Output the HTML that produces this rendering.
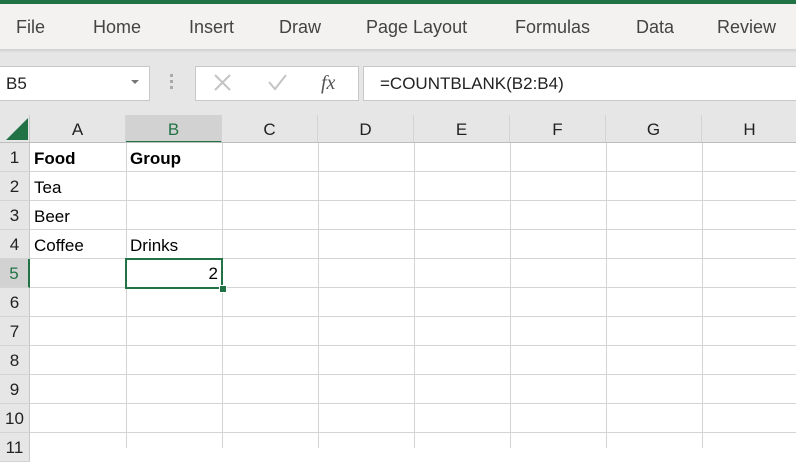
<!DOCTYPE html><html><head><style>
body{margin:0;width:796px;height:448px;overflow:hidden;background:#fff;font-family:"Liberation Sans",sans-serif;position:relative}
.a{position:absolute}
.tab{position:absolute;top:17px;font-size:18px;color:#444}
.ch{position:absolute;top:115px;height:28px;line-height:30px;text-align:center;font-size:17px;color:#222;border-right:1px solid #d4d4d4;background:#e6e6e6;box-sizing:border-box}
.rh{position:absolute;left:0;width:30px;height:29px;line-height:29px;text-align:center;font-size:17px;color:#222;background:#e6e6e6;border-bottom:1px solid #d4d4d4;border-right:1px solid #c8c8c8;box-sizing:border-box}
.c{position:absolute;font-size:17px;color:#000;line-height:29px}
</style></head><body>
<div class="a" style="left:0;top:0;width:796px;height:4px;background:#217346"></div>
<div class="a" style="left:0;top:4px;width:796px;height:45px;background:#f3f2f1"></div>
<div class="a" style="left:0;top:49px;width:796px;height:66px;background:#e6e6e6"></div>
<div class="a" style="left:0;top:49px;width:796px;height:4px;background:linear-gradient(#d0d0d0,#e6e6e6)"></div>
<div class="tab" style="left:16px">File</div><div class="tab" style="left:93px">Home</div><div class="tab" style="left:189px">Insert</div><div class="tab" style="left:279px">Draw</div><div class="tab" style="left:366px">Page Layout</div><div class="tab" style="left:515px">Formulas</div><div class="tab" style="left:636px">Data</div><div class="tab" style="left:717px">Review</div>
<div class="a" style="left:-1px;top:66px;width:149px;height:33px;background:#fff;border:1px solid #c8c8c8;font-size:17px;line-height:33px;text-indent:6px;color:#222">B5</div>
<div class="a" style="left:131px;top:80px;border:4px solid transparent;border-top:4px solid #777"></div>
<div class="a" style="left:170px;top:74px;width:3px;height:3px;background:#aaa;box-shadow:0 6px #aaa,0 12px #aaa"></div>
<div class="a" style="left:195px;top:66px;width:162px;height:33px;background:#fff;border:1px solid #c8c8c8"></div>
<svg class="a" style="left:195px;top:66px" width="162" height="33"><g stroke="#c4c4c4" stroke-width="2" fill="none"><path d="M20 9L35 24M35 9L20 24"/><path d="M74 16L80 23L91 9"/></g></svg>
<div class="a" style="left:321px;top:72px;font-size:20px;color:#555;font-family:'Liberation Serif',serif;font-style:italic">fx</div>
<div class="a" style="left:363px;top:66px;width:440px;height:33px;background:#fff;border:1px solid #c8c8c8;font-size:17px;line-height:33px;text-indent:16px;color:#222">=COUNTBLANK(B2:B4)</div>
<div class="a" style="left:0;top:115px;width:30px;height:28px;background:#e6e6e6;border-right:1px solid #c8c8c8;box-sizing:border-box"></div>
<div class="a" style="left:6px;top:118px;width:0;height:0;border-left:22px solid transparent;border-bottom:22px solid #217346"></div>
<div class="ch" style="left:30px;width:96px">A</div>
<div class="ch" style="left:126px;width:96px;background:#d2d2d2;color:#217346;border-bottom:2px solid #217346">B</div>
<div class="ch" style="left:222px;width:96px">C</div><div class="ch" style="left:318px;width:96px">D</div><div class="ch" style="left:414px;width:96px">E</div><div class="ch" style="left:510px;width:96px">F</div><div class="ch" style="left:606px;width:96px">G</div><div class="ch" style="left:702px;width:96px">H</div>
<div class="a" style="left:0;top:142px;width:796px;height:1px;background:#bdbdbd"></div>
<svg class="a" style="left:30px;top:143px" width="766" height="305">
<g stroke="#d4d4d4" stroke-width="1">
<line x1="96.5" y1="0" x2="96.5" y2="305"/><line x1="192.5" y1="0" x2="192.5" y2="305"/><line x1="288.5" y1="0" x2="288.5" y2="305"/><line x1="384.5" y1="0" x2="384.5" y2="305"/><line x1="480.5" y1="0" x2="480.5" y2="305"/><line x1="576.5" y1="0" x2="576.5" y2="305"/><line x1="672.5" y1="0" x2="672.5" y2="305"/>
<line x1="0" y1="28.5" x2="766" y2="28.5"/><line x1="0" y1="57.5" x2="766" y2="57.5"/><line x1="0" y1="86.5" x2="766" y2="86.5"/><line x1="0" y1="115.5" x2="766" y2="115.5"/><line x1="0" y1="144.5" x2="766" y2="144.5"/><line x1="0" y1="173.5" x2="766" y2="173.5"/><line x1="0" y1="202.5" x2="766" y2="202.5"/><line x1="0" y1="231.5" x2="766" y2="231.5"/><line x1="0" y1="260.5" x2="766" y2="260.5"/><line x1="0" y1="289.5" x2="766" y2="289.5"/>
</g></svg>
<div class="rh" style="top:143px">1</div><div class="rh" style="top:172px">2</div><div class="rh" style="top:201px">3</div><div class="rh" style="top:230px">4</div>
<div class="rh" style="top:259px;background:#d2d2d2;color:#217346;border-right:2px solid #217346">5</div>
<div class="rh" style="top:288px">6</div><div class="rh" style="top:317px">7</div><div class="rh" style="top:346px">8</div><div class="rh" style="top:375px">9</div><div class="rh" style="top:404px">10</div><div class="rh" style="top:433px">11</div>
<div class="c" style="left:34px;top:144px;font-weight:bold">Food</div><div class="c" style="left:130px;top:144px;font-weight:bold">Group</div>
<div class="c" style="left:34px;top:173px">Tea</div><div class="c" style="left:34px;top:202px">Beer</div><div class="c" style="left:34px;top:231px">Coffee</div><div class="c" style="left:130px;top:231px">Drinks</div>
<div class="a" style="left:125px;top:258px;width:98px;height:31px;border:2px solid #217346;box-sizing:border-box"></div>
<div class="c" style="left:126px;top:259px;width:92px;text-align:right">2</div>
<div class="a" style="left:219px;top:285px;width:6px;height:6px;background:#217346;border:1px solid #fff"></div>
</body></html>
